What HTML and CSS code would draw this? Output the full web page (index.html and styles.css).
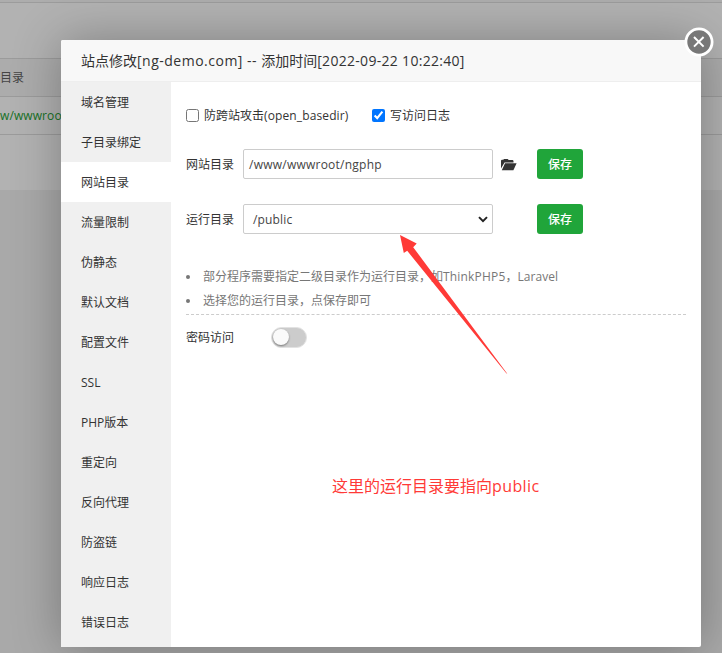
FILE: index.html
```html
<!DOCTYPE html>
<html lang="zh-CN">
<head>
<meta charset="utf-8">
<title>站点修改</title>
<link rel="stylesheet" href="styles.css">
</head>
<body>
<div class="backdrop">
  <div class="panel">
    <div class="panel-top"></div>
    <div class="panel-bar"></div>
    <div class="row head">目录</div>
    <div class="row path">w/wwwroot</div>
  </div>
</div>
<div class="modal">
  <header class="title">站点修改<span class="t1">[ng-demo.com] -- </span>添加时间<span class="t2">[2022-09-22 10:22:40]</span></header>
  <button class="close" aria-label="关闭"><svg width="30" height="30" viewBox="0 0 30 30"><circle cx="15" cy="15" r="13.1" fill="#787878" stroke="#fff" stroke-width="2.8"/><path d="M10 10l9.6 9.6M19.6 10l-9.6 9.6" stroke="#fff" stroke-width="2"/></svg></button>
  <div class="main">
    <nav class="menu">
      <a>域名管理</a><a>子目录绑定</a><a class="on">网站目录</a><a>流量限制</a><a>伪静态</a><a>默认文档</a><a>配置文件</a><a>SSL</a><a>PHP版本</a><a>重定向</a><a>反向代理</a><a>防盗链</a><a>响应日志</a><a>错误日志</a>
    </nav>
    <section class="content">
      <div class="checks">
        <label class="c1"><input type="checkbox"><span>防跨站攻击<span class="ob">(open_basedir)</span></span></label>
        <label><input type="checkbox" checked><span>写访问日志</span></label>
      </div>
      <div class="line">
        <span class="name">网站目录</span>
        <div class="field"><span class="site">/www/wwwroot/ngphp</span></div>
        <svg class="folder" width="16" height="12" viewBox="0 0 16 12" fill="#333"><path d="M0 9.4V1.6L.8.8h1.5L3 0h3.7l1 1h4l.8.8v1.6H3.5z"/><path d="M4 4.2h11.6L12.4 11.2H.8z"/></svg>
        <button class="save">保存</button>
      </div>
      <div class="line second">
        <span class="name">运行目录</span>
        <div class="field pick"><span>/public</span><svg width="10" height="7" viewBox="0 0 10 7"><path d="M1 1.1l4 4 4-4" fill="none" stroke="#222" stroke-width="2"/></svg></div>
        <button class="save">保存</button>
      </div>
      <ul class="tips">
        <li>部分程序需要指定二级目录作为运行目录，如<span class="tp">ThinkPHP5</span>，<span class="lv">Laravel</span></li>
        <li>选择您的运行目录，点保存即可</li>
      </ul>
      <div class="auth"><span>密码访问</span><i class="switch"></i></div>
      <p class="note">这里的运行目录要指向<span>public</span></p>
    </section>
  </div>
</div>
<svg class="arrow" width="722" height="653" viewBox="0 0 722 653"><path d="M400 235L416.7 243.6 413.2 247.2 507.3 373.7 506.3 373.2 407.2 250.8 403.8 253z" fill="#ff3a37"/></svg>
</body>
</html>
```
FILE: styles.css
```css
* { box-sizing: border-box; }
html, body { margin: 0; height: 100%; overflow: hidden; }
body {
  font: 12px/20px "Open Sans", "Noto Sans CJK SC", sans-serif;
  color: #333;
  background: #a9a9a9;
}
button { border: 0; padding: 0; font: inherit; }
.backdrop { height: 653px; }
.panel { height: 190px; background: #b2b2b2; }
.panel-top { height: 3px; background: #adadad; border-bottom: 1px solid #9c9c9c; }
.panel-bar { height: 55px; }
.row { height: 38px; line-height: 38px; border-top: 1px solid #9b9b9b; }
.head { color: #444; background: #acacac; }
.path { color: #167025; border-bottom: 1px solid #9b9b9b; height: 39px; letter-spacing: .1px; }
.modal {
  position: absolute;
  left: 61px;
  top: 40px;
  width: 640px;
  height: 607px;
  background: #fff;
  border-radius: 2px;
  box-shadow: 1px 1px 50px rgba(0, 0, 0, .3);
}
.title {
  height: 42px;
  line-height: 41px;
  padding-left: 20px;
  font-size: 14px;
  white-space: pre;
  background: #f8f8f8;
  border-bottom: 1px solid #eee;
  border-radius: 2px 2px 0 0;
}
.t1 { letter-spacing: .5px; }
.t2 { letter-spacing: .3px; }
.close { position: absolute; left: 623px; top: -13px; width: 30px; height: 30px; background: none; }
.close svg { display: block; }
.main { display: flex; height: 565px; }
.menu { width: 110px; background: #f0f0f0; }
.menu a { display: block; height: 40px; line-height: 38px; padding: 2px 0 0 20px; }
.menu .on { background: #fff; }
.content { flex: 1; padding: 24px 15px 0; }
.checks { display: flex; height: 20px; }
.checks label { display: flex; align-items: center; gap: 5px; white-space: nowrap; }
.checks .c1 { width: 186px; }
.checks input { margin: -1px 0 0; width: 13px; height: 13px; }
.ob { letter-spacing: .12px; }
.line { display: flex; align-items: center; height: 30px; margin-top: 23px; }
.second { margin-top: 25px; }
.name { width: 57px; padding-top: 2px; }
.field {
  width: 250px;
  height: 30px;
  line-height: 28px;
  padding: 1px 0 0 5px;
  border: 1px solid #ccc;
  border-radius: 2px;
  color: #444;
}
.site { letter-spacing: .24px; }
.pick { display: flex; align-items: center; justify-content: space-between; padding: 0 4px 0 9px; }
.pick span { padding-top: 2px; letter-spacing: .15px; }
.folder { margin: 2px 0 0 8px; }
.save {
  width: 46px;
  height: 30px;
  margin-left: 20px;
  padding-top: 1px;
  border-radius: 3px;
  background: #20a53a;
  color: #fff;
  font-weight: 500;
}
.second .save { margin-left: 44px; }
.tips {
  list-style: none;
  margin: 30px 0 0;
  padding: 1px 0 0;
  height: 51px;
  line-height: 24px;
  color: #777;
  border-bottom: 1px dashed #ccc;
}
.tips li { display: flex; align-items: center; height: 24px; white-space: nowrap; }
.tips li::before { content: ""; width: 4px; height: 4px; margin-right: 13px; border-radius: 50%; background: #777; }
.tp { letter-spacing: .18px; }
.lv { letter-spacing: .05px; }
.auth { display: flex; align-items: center; height: 24px; margin-top: 10px; }
.auth > span { width: 85px; padding-top: 1px; }
.switch { display: block; width: 36px; height: 21px; padding: 2px; border-radius: 11px; background: #ccc; border: 1px solid #e2e2e2; }
.switch::before { content: ""; display: block; width: 16px; height: 16px; margin: -.5px 0 0 -1px; border-radius: 50%; background: #fafafa; box-shadow: 0 1px 2px rgba(0, 0, 0, .4); }
.note { margin: 125px 0 0 146px; font-size: 16px; line-height: 24px; color: #ff3a37; white-space: nowrap; }
.note span { letter-spacing: .4px; }
.arrow { position: absolute; left: 0; top: 0; }
```
